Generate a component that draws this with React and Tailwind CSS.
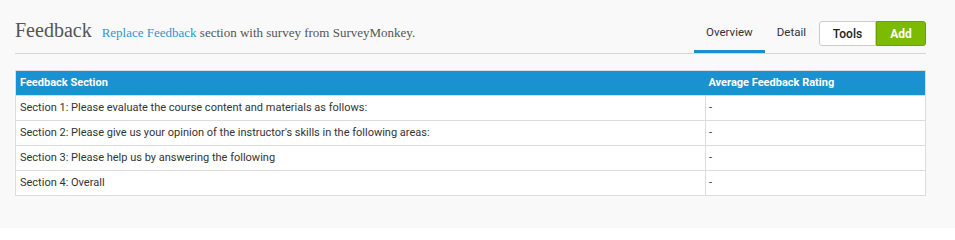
import React from 'react';

const rows = [
  'Section 1: Please evaluate the course content and materials as follows:',
  "Section 2: Please give us your opinion of the instructor's skills in the following areas:",
  'Section 3: Please help us by answering the following',
  'Section 4: Overall',
];

const App = () => {
  return (
    <div className="min-h-[228px] bg-[#f9f9f9] pl-[15px] pr-[29px] pt-[18px] font-['Roboto',sans-serif] text-[#333]">
      {/* Header */}
      <div className="flex items-end justify-between border-b border-[#d6d6d6] h-[36px]">
        <div className="flex items-baseline gap-[10px] pb-[11px]">
          <h1 className="font-['Liberation_Serif',serif] text-[20px] leading-none text-[#555]">Feedback</h1>
          <p className="font-['Liberation_Serif',serif] text-[13px] text-[#555]">
            <a href="#" className="text-[#2b98d4]">Replace Feedback</a> section with survey from SurveyMonkey.
          </p>
        </div>
        <div className="flex items-end">
          <button className="h-[34px] px-[12px] text-[11.5px] text-[#333] border-b-[3px] border-[#1a8fce] pb-[4px] ml-[-3px]">
            Overview
          </button>
          <button className="h-[34px] px-[12px] text-[11.5px] text-[#333] pb-[7px]">Detail</button>
          <div className="flex self-start mt-[2px] ml-[1px]">
            <button className="w-[57px] h-[25px] text-[12px] font-medium text-[#222] bg-white border border-[#ccc] rounded-l-[3px]">
              Tools
            </button>
            <button className="w-[50px] h-[25px] text-[12px] font-bold text-white bg-[#7cbb00] border border-[#6aa10a] rounded-r-[3px]">
              Add
            </button>
          </div>
        </div>
      </div>

      {/* Table */}
      <table className="mt-[16px] w-full border-collapse border border-[#ddd] text-[11px]">
        <thead>
          <tr className="bg-[#1a91d0] text-white">
            <th className="h-[25px] pl-[4px] text-left font-bold w-[690px]">Feedback Section</th>
            <th className="h-[25px] pl-[3px] text-left font-bold">Average Feedback Rating</th>
          </tr>
        </thead>
        <tbody>
          {rows.map((r) => (
            <tr key={r} className="bg-white">
              <td className="h-[25px] pl-[4px] border border-[#ddd]">{r}</td>
              <td className="h-[25px] pl-[3px] border border-[#ddd]">-</td>
            </tr>
          ))}
        </tbody>
      </table>
    </div>
  );
};

export default App;
